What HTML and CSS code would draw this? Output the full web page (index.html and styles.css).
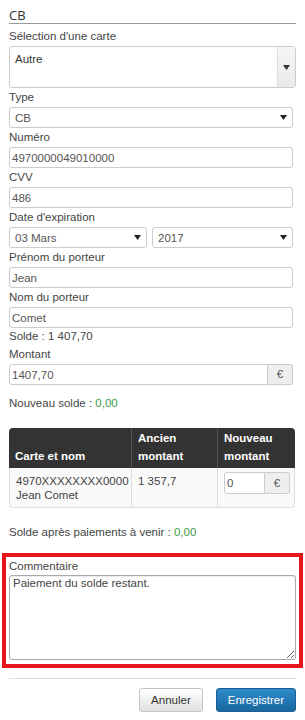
FILE: index.html
```html
<!DOCTYPE html>
<html lang="fr">
<head>
  <meta charset="utf-8">
  <meta name="viewport" content="width=device-width, initial-scale=1">
  <title>Paiement CB</title>
  <link rel="stylesheet" href="styles.css">
</head>
<body>
<div class="panel">
  <h3 class="panel-title">CB</h3>

  <label class="lbl first">Sélection d'une carte</label>
  <div class="picker">
    <div class="picker-value">Autre</div>
    <div class="picker-btn"><svg class="tri" width="7" height="5" viewBox="0 0 7 5"><path d="M0 0h7L3.5 5z"/></svg></div>
  </div>

  <label class="lbl">Type</label>
  <div class="select">
    <select class="ctl sel"><option>CB</option></select>
    <svg class="caret" width="7" height="5" viewBox="0 0 7 5"><path d="M0 0h7L3.5 5z"/></svg>
  </div>

  <label class="lbl">Numéro</label>
  <input class="ctl" type="text" value="4970000049010000">

  <label class="lbl">CVV</label>
  <input class="ctl" type="text" value="486">

  <label class="lbl">Date d'expiration</label>
  <div class="date-row">
    <div class="select month">
      <select class="ctl sel"><option>03 Mars</option></select>
      <svg class="caret" width="7" height="5" viewBox="0 0 7 5"><path d="M0 0h7L3.5 5z"/></svg>
    </div>
    <div class="select year">
      <select class="ctl sel"><option>2017</option></select>
      <svg class="caret" width="7" height="5" viewBox="0 0 7 5"><path d="M0 0h7L3.5 5z"/></svg>
    </div>
  </div>

  <label class="lbl">Prénom du porteur</label>
  <input class="ctl" type="text" value="Jean">

  <label class="lbl">Nom du porteur</label>
  <input class="ctl" type="text" value="Comet">

  <p class="line solde">Solde : 1 407,70</p>

  <label class="lbl">Montant</label>
  <div class="group">
    <input class="ctl" type="text" value="1407,70">
    <span class="addon">€</span>
  </div>

  <p class="line new-solde">Nouveau solde : <span class="ok">0,00</span></p>

  <table class="grid">
    <colgroup><col class="c1"><col class="c2"><col class="c3"></colgroup>
    <thead>
      <tr><th>Carte et nom</th><th>Ancien montant</th><th>Nouveau montant</th></tr>
    </thead>
    <tbody>
      <tr>
        <td>4970XXXXXXXX0000<br>Jean Comet</td>
        <td>1 357,7</td>
        <td>
          <div class="group small">
            <input class="ctl" type="text" value="0">
            <span class="addon">€</span>
          </div>
        </td>
      </tr>
    </tbody>
  </table>

  <p class="line after">Solde après paiements à venir : <span class="ok">0,00</span></p>

  <div class="highlight">
    <label class="lbl comment-lbl">Commentaire</label>
    <textarea class="comment">Paiement du solde restant.</textarea>
  </div>

  <hr class="sep">

  <div class="actions">
    <button class="btn">Annuler</button>
    <button class="btn btn-primary">Enregistrer</button>
  </div>
</div>
</body>
</html>
```

FILE: styles.css
```css
body { margin: 0; font-family: "Liberation Sans", Arial, sans-serif; font-size: 11.5px; color: #444; background: #fff; }
.panel { padding: 0 9px; }

.panel-title { margin: 0; padding-top: 8px; line-height: 15px; font-family: "Open Sans", sans-serif; font-size: 13px; font-weight: normal; color: #333; border-bottom: 1px solid #999; }

.lbl { display: block; line-height: 19px; }
.first { margin-top: 3px; }

/* card picker */
.picker { display: flex; height: 42px; box-sizing: border-box; border: 1px solid #ccc; border-radius: 3px; }
.picker-value { flex: 1; padding: 5px 5px; line-height: 14px; color: #333; }
.picker-btn { width: 17px; border-left: 1px solid #ddd; background: linear-gradient(#f7f7f7, #e9e9e9); display: flex; align-items: center; justify-content: center; border-radius: 0 2px 2px 0; }
.tri { fill: #333; }

/* controls */
.ctl { display: block; box-sizing: border-box; width: calc(100% - 3px); height: 21px; margin: 0; border: 1px solid #ccc; border-radius: 3px; padding: 0 2px; font: inherit; color: #555; background: #fff; outline: none; }
.select { position: relative; width: calc(100% - 3px); }
.select .ctl { width: 100%; }
.sel { -webkit-appearance: none; appearance: none; padding-left: 5px; }
.caret { position: absolute; right: 6px; top: 8px; fill: #222; pointer-events: none; }

.date-row { display: flex; gap: 5px; width: calc(100% - 3px); }
.date-row .month { width: 138px; flex: none; }
.date-row .year { flex: 1; width: auto; }

.line { margin: 0; line-height: 18px; }
.solde { line-height: 17px; }
.new-solde { margin: 9px 0 16px; }
.after { margin: 15px 0 12px; }
.ok { color: #3a9a47; }

/* input group */
.group { display: flex; width: calc(100% - 3px); }
.group .ctl { flex: 1; width: auto; min-width: 0; border-radius: 3px 0 0 3px; }
.addon { flex: none; width: 25px; box-sizing: border-box; height: 21px; line-height: 19px; text-align: center; background: #eee; border: 1px solid #ccc; border-left: 0; border-radius: 0 3px 3px 0; color: #555; }
.group.small { width: 66px; margin-top: -2px; }
.group.small .ctl, .group.small .addon { height: 22px; }
.group.small .addon { line-height: 20px; }

/* table */
.grid { width: calc(100% - 1px); border-collapse: separate; border-spacing: 0; table-layout: fixed; }
.grid .c1 { width: 122px; }
.grid .c2 { width: 86px; }
.grid .c3 { width: 78px; }
.grid th { background: #333; color: #fff; font-weight: bold; text-align: left; vertical-align: bottom; padding: 1px 6px 3px; line-height: 18px; }
.grid th + th { border-left: 1px solid #555; }
.grid th:first-child { border-top-left-radius: 4px; }
.grid th:last-child { border-top-right-radius: 4px; }
.grid td { background: #f9f9f9; vertical-align: top; padding: 6px 6px 5px; line-height: 14px; border-bottom: 1px solid #ddd; border-left: 1px solid #ddd; color: #444; }
.grid td:last-child { border-right: 1px solid #ddd; border-bottom-right-radius: 4px; }
.grid td:first-child { border-bottom-left-radius: 4px; }

/* comment */
.highlight { margin: 0 -7px; border: 4px solid #e8141c; padding: 0 3px 4px; }
.comment-lbl { line-height: 18px; }
.comment { display: block; box-sizing: border-box; width: 100%; height: 85px; margin: 0; border: 1px solid #aaa; border-radius: 3px; padding: 1px 3px; font: inherit; line-height: 13px; color: #444; box-shadow: inset 0 1px 1px rgba(0,0,0,.08); outline: none; }

.sep { margin: 10px 0 9px; border: 0; border-top: 1px solid #ddd; }

.actions { display: flex; justify-content: flex-end; gap: 13px; }
.btn { height: 24px; padding: 0 11px; font: inherit; color: #333; border: 1px solid #c4c4c4; border-radius: 3px; background: linear-gradient(#fff, #e2e2e2); }
.btn-primary { color: #fff; border-color: #1a5f94; background: linear-gradient(#2f8bcc, #19689f); }
```
